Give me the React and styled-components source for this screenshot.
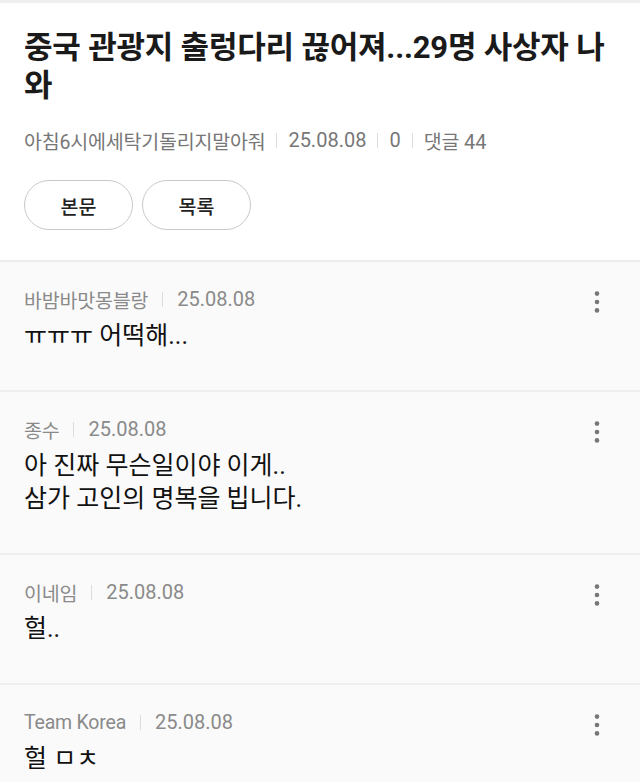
import React from "react";
import styled, { createGlobalStyle } from "styled-components";

const GlobalStyle = createGlobalStyle`
  html, body {
    margin: 0;
    padding: 0;
    background: #fafafa;
  }
  body {
    font-family: Roboto, "Noto Sans CJK KR", sans-serif;
    color: #111;
  }
  * { box-sizing: border-box; }
`;

const Page = styled.div`
  width: 640px;
  min-height: 782px;
  background: #fafafa;
`;

const Header = styled.header`
  background: #fff;
  border-top: 3px solid #efefef;
  border-bottom: 2px solid #ececec;
  padding: 26px 24px 30px;
`;

const Title = styled.h1`
  margin: 0;
  font-size: 31px;
  line-height: 38px;
  font-weight: 700;
  letter-spacing: -0.2px;
  color: #1a1a1a;
  word-break: normal;
  line-break: anywhere;
`;

const MetaRow = styled.div`
  display: flex;
  align-items: center;
  height: ${(p) => p.$h}px;
  margin-top: ${(p) => p.$mt || 0}px;
  color: ${(p) => p.$color};
  white-space: nowrap;
`;

const Author = styled.span`
  font-size: 19.5px;
  letter-spacing: -0.2px;
`;

const MetaItem = styled.span`
  font-size: 20px;
`;

const Divider = styled.span`
  width: 1px;
  height: 15px;
  background: #dcdcdc;
  margin: 0 ${(p) => p.$gap}px;
`;

const ButtonRow = styled.div`
  display: flex;
  gap: 9px;
  margin-top: 28px;
`;

const PillButton = styled.button`
  width: 109px;
  height: 50px;
  border: 1px solid #c9c9c9;
  border-radius: 25px;
  background: #fff;
  color: #222;
  font-family: Roboto, "Noto Sans CJK KR", sans-serif;
  font-size: 19.5px;
  font-weight: 500;
  padding: 0;
  cursor: pointer;
`;

const CommentList = styled.ul`
  list-style: none;
  margin: 0;
  padding: 0;
`;

const CommentItem = styled.li`
  display: flex;
  align-items: flex-start;
  padding: 27px 31px 38px 24px;
  border-bottom: 2px solid #efefef;
  background: #fafafa;
`;

const CommentBody = styled.div`
  flex: 1;
  min-width: 0;
`;

const CommentText = styled.p`
  margin: 10px 0 0;
  font-size: 25px;
  line-height: 33px;
  color: #111;
  white-space: pre-line;
`;

const MoreButton = styled.button`
  width: 24px;
  height: 24px;
  margin-top: 1px;
  padding: 0;
  border: 0;
  background: transparent;
  display: flex;
  align-items: center;
  justify-content: center;
  cursor: pointer;
`;

const MoreIcon = () => (
  <svg width="24" height="24" viewBox="0 0 24 24" aria-hidden="true">
    <circle cx="12" cy="3.6" r="2.3" fill="#777" />
    <circle cx="12" cy="12" r="2.3" fill="#777" />
    <circle cx="12" cy="20.4" r="2.3" fill="#777" />
  </svg>
);

const comments = [
  { name: "바밤바맛몽블랑", date: "25.08.08", text: "ㅠㅠㅠ 어떡해..." },
  { name: "종수", date: "25.08.08", text: "아 진짜 무슨일이야 이게..\n삼가 고인의 명복을 빕니다." },
  { name: "이네임", date: "25.08.08", text: "헐.." },
  { name: "Team Korea", date: "25.08.08", text: "헐 ㅁㅊ" },
];

export default function App() {
  return (
    <Page>
      <GlobalStyle />
      <Header>
        <Title>중국 관광지 출렁다리 끊어져...29명 사상자 나와</Title>
        <MetaRow $h={24} $mt={23} $color="#777">
          <Author>아침6시에세탁기돌리지말아줘</Author>
          <Divider $gap={11} />
          <MetaItem>25.08.08</MetaItem>
          <Divider $gap={11} />
          <MetaItem>0</MetaItem>
          <Divider $gap={11} />
          <MetaItem>
            <Author>댓글</Author> 44
          </MetaItem>
        </MetaRow>
        <ButtonRow>
          <PillButton>본문</PillButton>
          <PillButton>목록</PillButton>
        </ButtonRow>
      </Header>
      <CommentList>
        {comments.map((c, i) => (
          <CommentItem key={i}>
            <CommentBody>
              <MetaRow $h={20} $color="#8a8a8a">
                <Author>{c.name}</Author>
                <Divider $gap={14} />
                <MetaItem>{c.date}</MetaItem>
              </MetaRow>
              <CommentText>{c.text}</CommentText>
            </CommentBody>
            <MoreButton aria-label="더보기">
              <MoreIcon />
            </MoreButton>
          </CommentItem>
        ))}
      </CommentList>
    </Page>
  );
}
